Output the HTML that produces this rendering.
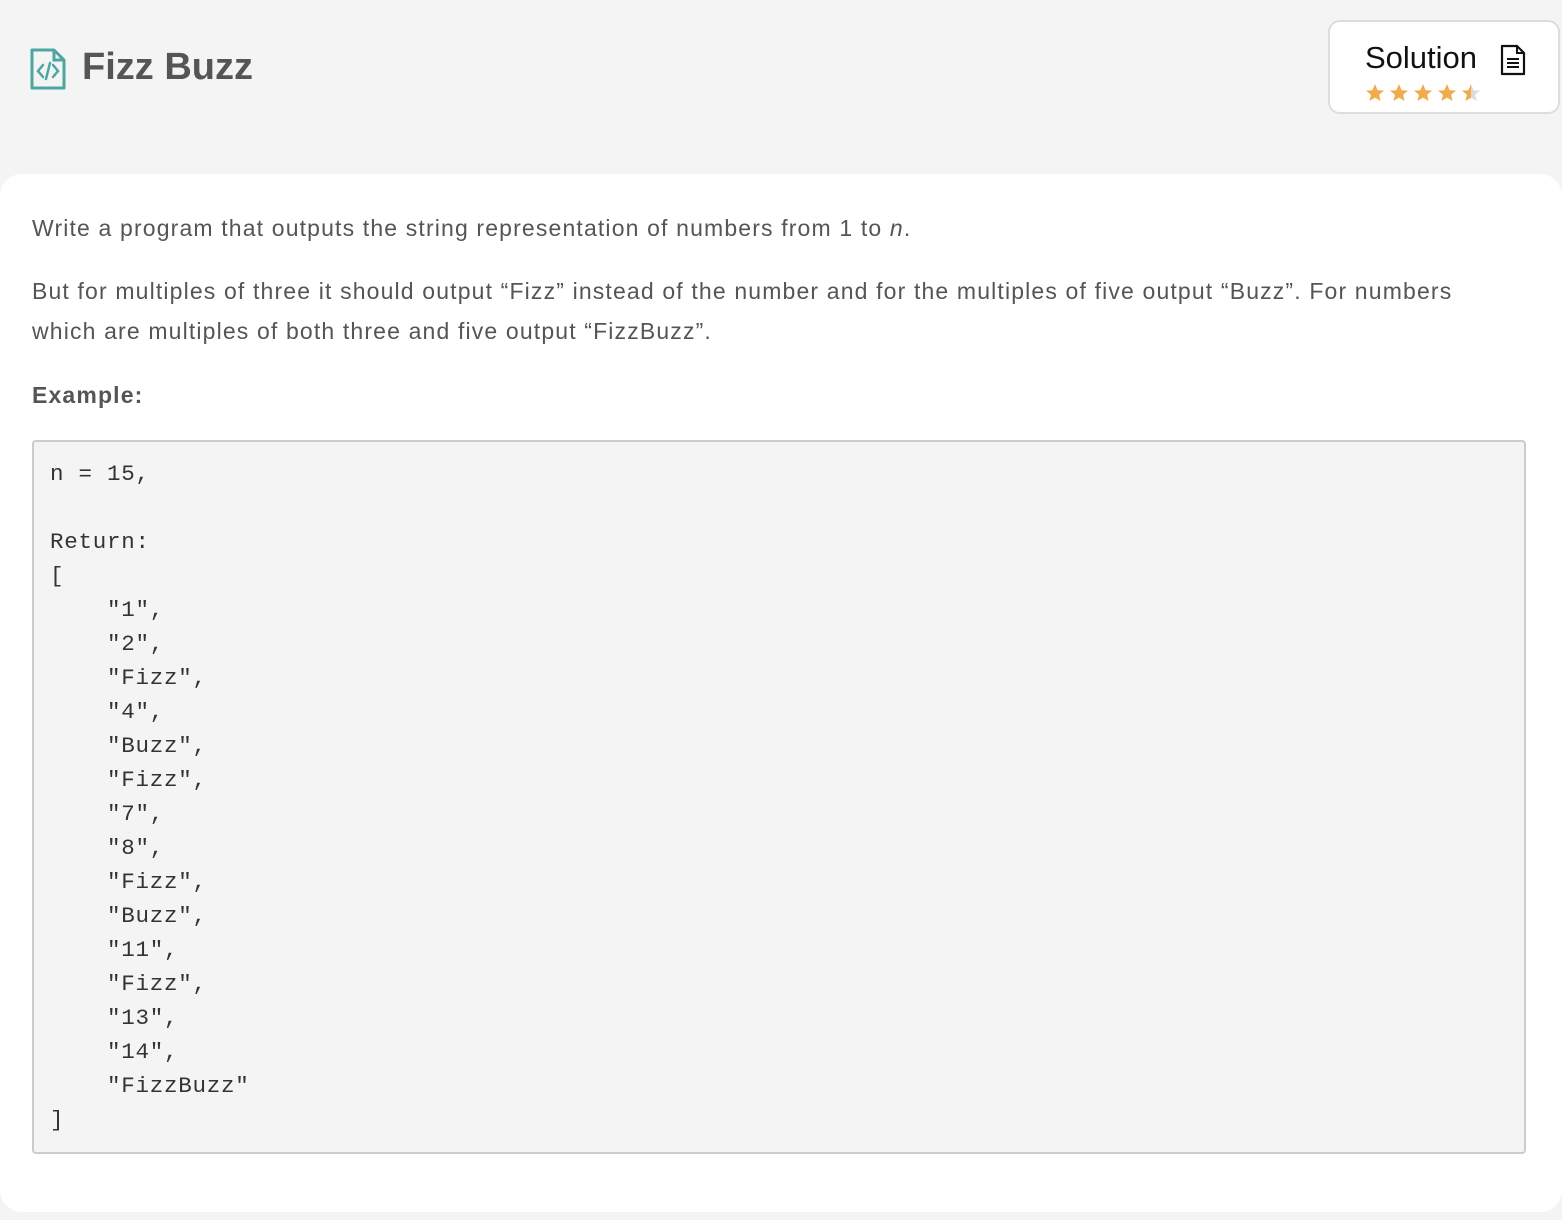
<!DOCTYPE html>
<html><head><style>
body{margin:0;background:#f4f4f4;width:1562px;height:1220px;overflow:hidden;font-family:"Liberation Sans",sans-serif;position:relative}
.title{position:absolute;left:82px;top:46px;font-size:38px;font-weight:bold;color:#555}
.icon{position:absolute;left:30px;top:48px}
.sol{position:absolute;left:1328px;top:20px;width:232px;height:94px;box-sizing:border-box;border:2px solid #ddd;border-radius:12px;background:#fff}
.sol .t{position:absolute;left:35px;top:18px;font-size:31px;color:#111}
.card{position:absolute;left:0;top:174px;width:1562px;height:1038px;background:#fff;border-radius:22px}
p{position:absolute;left:32px;margin:0;font-size:23px;letter-spacing:1.15px;color:#555;line-height:40px;white-space:nowrap}
pre{position:absolute;left:32px;top:440px;width:1494px;height:714px;box-sizing:border-box;margin:0;background:#f4f4f4;border:2px solid #ccc;border-radius:4px;padding:15px 16px;font-family:"Liberation Mono",monospace;font-size:22.5px;letter-spacing:0.75px;line-height:34px;color:#333}
</style></head><body>
<svg class="icon" width="36" height="42" viewBox="0 0 36 42"><path d="M2 2H24L34 12V40H2Z" fill="none" stroke="#4ea6a3" stroke-width="3" stroke-linejoin="round"/><path d="M24 2V12H34" fill="none" stroke="#4ea6a3" stroke-width="3"/><path d="M13 17L8 23L13 29M23 17L28 23L23 29M20 15L16 31" fill="none" stroke="#4ea6a3" stroke-width="2.5" stroke-linecap="round"/></svg>
<div class="title">Fizz Buzz</div>
<div class="sol"><div class="t">Solution</div>
<svg style="position:absolute;left:170px;top:22px" width="26" height="32" viewBox="0 0 26 32"><path d="M2 2H17L24 9V30H2Z" fill="none" stroke="#111" stroke-width="2.2" stroke-linejoin="round"/><path d="M17 2V9H24M7 15H19M7 19H19M7 23H19" fill="none" stroke="#111" stroke-width="2"/></svg>
<svg style="position:absolute;left:36px;top:62px" width="118" height="20" viewBox="0 0 118 20">
<g fill="#f0ac4c">
<path d="M9 0L11.6 6.2L18 6.6L13.1 10.8L14.6 17L9 13.6L3.4 17L4.9 10.8L0 6.6L6.4 6.2Z"/>
<path transform="translate(24 0)" d="M9 0L11.6 6.2L18 6.6L13.1 10.8L14.6 17L9 13.6L3.4 17L4.9 10.8L0 6.6L6.4 6.2Z"/>
<path transform="translate(48 0)" d="M9 0L11.6 6.2L18 6.6L13.1 10.8L14.6 17L9 13.6L3.4 17L4.9 10.8L0 6.6L6.4 6.2Z"/>
<path transform="translate(72 0)" d="M9 0L11.6 6.2L18 6.6L13.1 10.8L14.6 17L9 13.6L3.4 17L4.9 10.8L0 6.6L6.4 6.2Z"/>
</g>
<path transform="translate(96 0)" fill="#ddd" d="M9 0L11.6 6.2L18 6.6L13.1 10.8L14.6 17L9 13.6L3.4 17L4.9 10.8L0 6.6L6.4 6.2Z"/>
<path transform="translate(96 0)" fill="#f0ac4c" d="M9 0L9 13.6L3.4 17L4.9 10.8L0 6.6L6.4 6.2Z"/>
</svg>
</div>
<div class="card"></div>
<p style="top:208px">Write a program that outputs the string representation of numbers from 1 to <i>n</i>.</p>
<p style="top:271px">But for multiples of three it should output “Fizz” instead of the number and for the multiples of five output “Buzz”. For numbers<br>which are multiples of both three and five output “FizzBuzz”.</p>
<p style="top:375px;font-weight:bold">Example:</p>
<pre>n = 15,

Return:
[
    "1",
    "2",
    "Fizz",
    "4",
    "Buzz",
    "Fizz",
    "7",
    "8",
    "Fizz",
    "Buzz",
    "11",
    "Fizz",
    "13",
    "14",
    "FizzBuzz"
]</pre>
</body></html>
